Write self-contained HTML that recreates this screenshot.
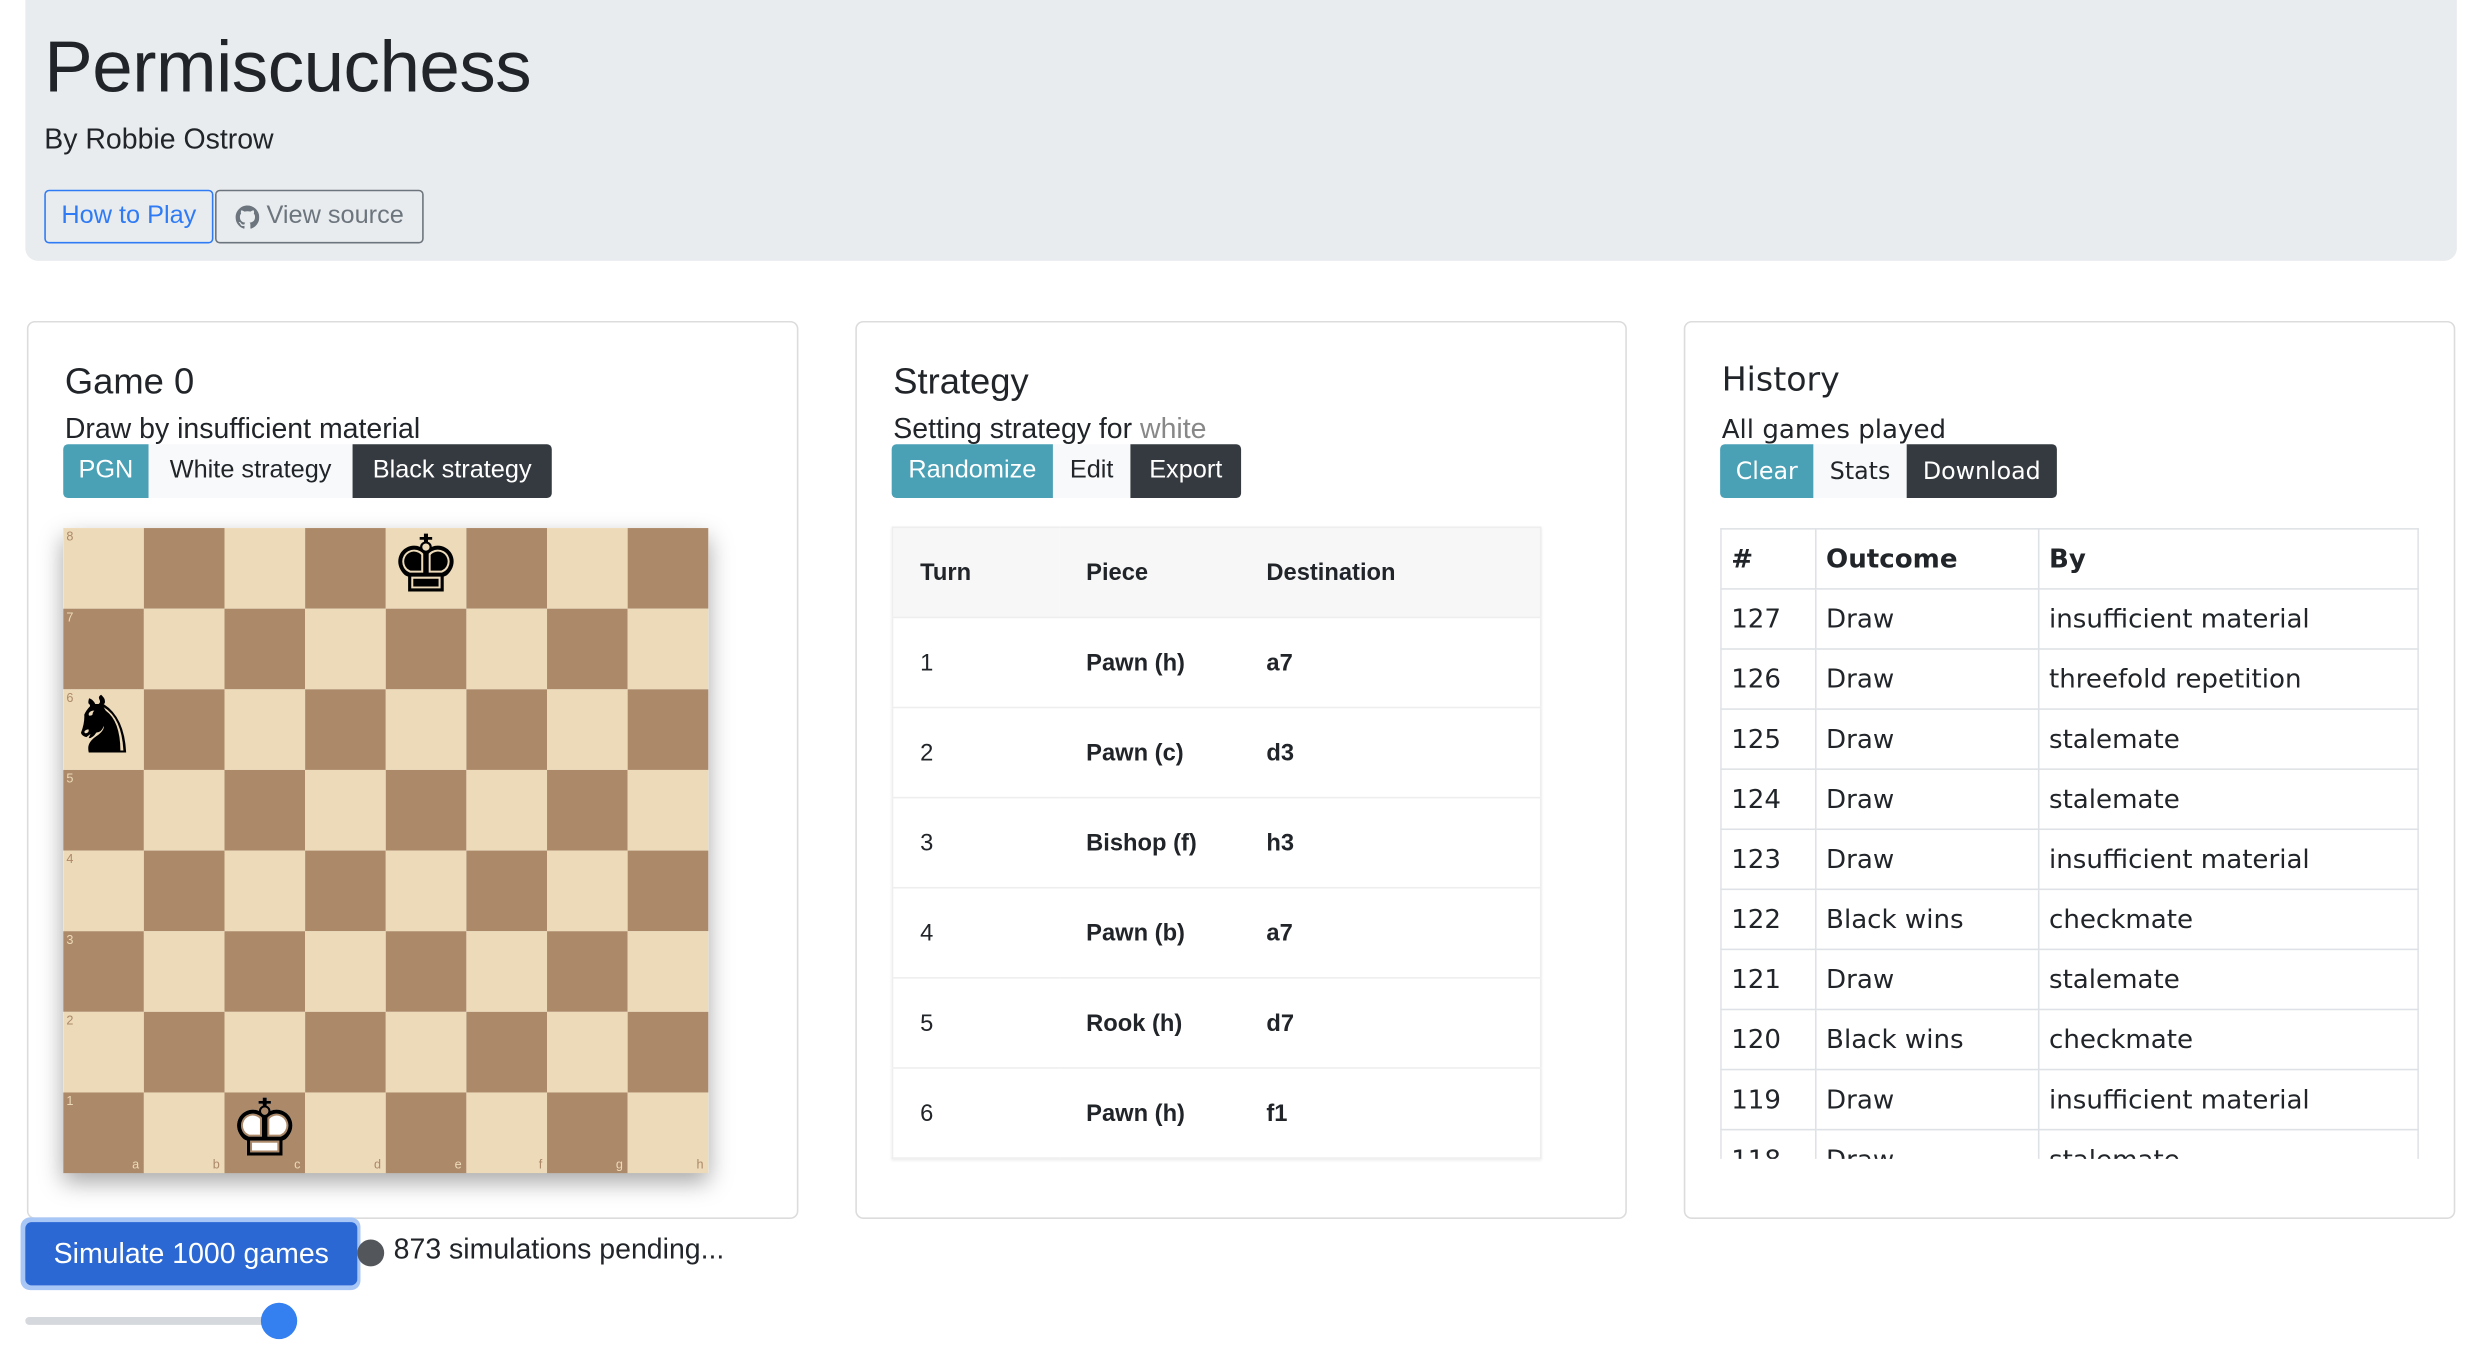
<!DOCTYPE html>
<html><head><meta charset="utf-8">
<style>
html,body{margin:0;padding:0;background:#fff;width:2478px;height:1346px;overflow:hidden}
#w{position:absolute;left:0;top:0;width:1568px;height:852px;transform:scale(1.581);transform-origin:0 0;font-family:"Liberation Sans",sans-serif;color:#212529}
.abs{position:absolute}
.jumbo{left:16px;top:-8px;width:1538px;height:173px;background:#e9ecef;border-radius:8px}
h1{position:absolute;left:28px;top:15px;margin:0;font-size:46px;font-weight:400;letter-spacing:-0.3px}
.btn{position:absolute;box-sizing:border-box;font-size:16px;display:flex;align-items:center;justify-content:center;white-space:nowrap}
.card{position:absolute;top:203px;width:488px;height:568px;border:1px solid #dcdcdc;border-radius:5px;box-sizing:border-box;background:#fff}
.ct{position:absolute;left:23px;top:24px;font-size:23px}
.cs{position:absolute;left:23px;top:57px;font-size:18px}
.board{position:absolute;left:40px;top:334px;width:408px;height:408px;box-shadow:0 6px 14px rgba(0,0,0,.35);display:grid;grid-template-columns:repeat(8,51px);grid-template-rows:repeat(8,51px)}
.sq{position:relative}
.l{background:#eddab9}.d{background:#ac8968}
.sq .n{position:absolute;left:2px;top:1px;font-size:8px}
.sq .f{position:absolute;right:3px;bottom:1px;font-size:8px}
.l .n,.l .f{color:#ac8968}.d .n,.d .f{color:#eddab9}
.pc{position:absolute;left:0;top:-2px;width:51px;height:51px;font-family:"DejaVu Sans",sans-serif;font-size:50px;line-height:51px;text-align:center;color:#000}
table{border-collapse:collapse}
.st{position:absolute;left:564px;top:333px;width:411px;font-size:15px;border:1px solid #eee;box-shadow:0 1px 2px rgba(0,0,0,.08)}
.st td,.st th{height:56px;border-top:1px solid #eee;text-align:left;padding:0 0 0 17px}
.st th{background:#f7f7f7;font-weight:700}
.st td.b{font-weight:700}
.hw{position:absolute;left:1088px;top:334px;width:442px;height:399px;overflow:hidden}
.ht{width:442px;font-family:"DejaVu Sans",sans-serif;font-size:16.5px;border:1px solid #dee2e6}
.ht td,.ht th{height:37px;border:1px solid #dee2e6;text-align:left;padding:0 0 0 6px;font-weight:400}
.ht th{font-weight:700}
</style></head><body><div id="w">
<div class="abs jumbo"></div>
<h1>Permiscuchess</h1>
<div class="abs" style="left:28px;top:78px;font-size:18px">By Robbie Ostrow</div>
<div class="btn" style="left:28px;top:120px;width:107px;height:34px;border:1px solid #2f7bf5;border-radius:3px;color:#2f7bf5">How to Play</div>
<div class="btn" style="left:136px;top:120px;width:132px;height:34px;border:1px solid #6c757d;border-radius:3px;color:#6c757d"><svg width="15" height="15" viewBox="0 0 16 16" style="margin-right:5px"><path fill="#6c757d" d="M8 0C3.58 0 0 3.58 0 8c0 3.540 2.29 6.53 5.47 7.59.4.07.55-.17.55-.38 0-.19-.01-.82-.01-1.49-2.010.37-2.530-.49-2.69-.94-.09-.23-.48-.94-.82-1.130-.28-.15-.68-.52-.01-.53.63-.01 1.080.58 1.230.82.72 1.210 1.870.87 2.330.66.07-.52.28-.87.51-1.070-1.780-.2-3.640-.89-3.640-3.950 0-.87.31-1.590.82-2.150-.08-.2-.36-1.020.08-2.120 0 0 .67-.21 2.200.82.64-.18 1.320-.27 2-.27.68 0 1.360.09 2 .27 1.530-1.040 2.200-.82 2.200-.82.44 1.100.16 1.920.08 2.120.51.56.82 1.270.82 2.150 0 3.070-1.870 3.750-3.650 3.950.29.25.54.73.54 1.480 0 1.070-.01 1.930-.01 2.200 0 .21.15.46.55.38A8.013 8.013 0 0016 8c0-4.420-3.580-8-8-8z"/></svg>View source</div>

<div class="card" style="left:17px">
<div class="ct">Game 0</div><div class="cs">Draw by insufficient material</div>
</div>
<div class="btn" style="left:40px;top:281px;width:54px;height:34px;background:#4aa0b5;color:#fff;border-radius:3px 0 0 3px">PGN</div>
<div class="btn" style="left:94px;top:281px;width:129px;height:34px;background:#f8f9fa">White strategy</div>
<div class="btn" style="left:223px;top:281px;width:126px;height:34px;background:#343a40;color:#fff;border-radius:0 3px 3px 0">Black strategy</div>
<div class="board">
<div class="sq l"><span class="n">8</span></div><div class="sq d"></div><div class="sq l"></div><div class="sq d"></div><div class="sq l"><span class="pc">♚</span></div><div class="sq d"></div><div class="sq l"></div><div class="sq d"></div>
<div class="sq d"><span class="n">7</span></div><div class="sq l"></div><div class="sq d"></div><div class="sq l"></div><div class="sq d"></div><div class="sq l"></div><div class="sq d"></div><div class="sq l"></div>
<div class="sq l"><span class="n">6</span><span class="pc">♞</span></div><div class="sq d"></div><div class="sq l"></div><div class="sq d"></div><div class="sq l"></div><div class="sq d"></div><div class="sq l"></div><div class="sq d"></div>
<div class="sq d"><span class="n">5</span></div><div class="sq l"></div><div class="sq d"></div><div class="sq l"></div><div class="sq d"></div><div class="sq l"></div><div class="sq d"></div><div class="sq l"></div>
<div class="sq l"><span class="n">4</span></div><div class="sq d"></div><div class="sq l"></div><div class="sq d"></div><div class="sq l"></div><div class="sq d"></div><div class="sq l"></div><div class="sq d"></div>
<div class="sq d"><span class="n">3</span></div><div class="sq l"></div><div class="sq d"></div><div class="sq l"></div><div class="sq d"></div><div class="sq l"></div><div class="sq d"></div><div class="sq l"></div>
<div class="sq l"><span class="n">2</span></div><div class="sq d"></div><div class="sq l"></div><div class="sq d"></div><div class="sq l"></div><div class="sq d"></div><div class="sq l"></div><div class="sq d"></div>
<div class="sq d"><span class="n">1</span><span class="f">a</span></div><div class="sq l"><span class="f">b</span></div><div class="sq d"><span class="pc" style="color:#fff;-webkit-text-stroke:0">♚</span><span class="pc">♔</span><span class="f">c</span></div><div class="sq l"><span class="f">d</span></div><div class="sq d"><span class="f">e</span></div><div class="sq l"><span class="f">f</span></div><div class="sq d"><span class="f">g</span></div><div class="sq l"><span class="f">h</span></div>
</div>

<div class="card" style="left:541px">
<div class="ct">Strategy</div><div class="cs">Setting strategy for <span style="color:#888">white</span></div>
</div>
<div class="btn" style="left:564px;top:281px;width:102px;height:34px;background:#4aa0b5;color:#fff;border-radius:3px 0 0 3px">Randomize</div>
<div class="btn" style="left:666px;top:281px;width:49px;height:34px;background:#f8f9fa">Edit</div>
<div class="btn" style="left:715px;top:281px;width:70px;height:34px;background:#343a40;color:#fff;border-radius:0 3px 3px 0">Export</div>
<table class="st">
<tr><th style="width:88px">Turn</th><th style="width:97px">Piece</th><th>Destination</th></tr>
<tr><td>1</td><td class="b">Pawn (h)</td><td class="b">a7</td></tr>
<tr><td>2</td><td class="b">Pawn (c)</td><td class="b">d3</td></tr>
<tr><td>3</td><td class="b">Bishop (f)</td><td class="b">h3</td></tr>
<tr><td>4</td><td class="b">Pawn (b)</td><td class="b">a7</td></tr>
<tr><td>5</td><td class="b">Rook (h)</td><td class="b">d7</td></tr>
<tr><td>6</td><td class="b">Pawn (h)</td><td class="b">f1</td></tr>
</table>

<div class="card" style="left:1065px">
<div class="ct" style="font-family:'DejaVu Sans',sans-serif;font-size:21px">History</div><div class="cs" style="font-family:'DejaVu Sans',sans-serif;font-size:16.5px;top:58px">All games played</div>
</div>
<div class="btn" style="left:1088px;top:281px;width:59px;height:34px;background:#4aa0b5;color:#fff;border-radius:3px 0 0 3px;font-family:'DejaVu Sans',sans-serif;font-size:15px">Clear</div>
<div class="btn" style="left:1147px;top:281px;width:59px;height:34px;background:#f8f9fa;font-family:'DejaVu Sans',sans-serif;font-size:15px">Stats</div>
<div class="btn" style="left:1206px;top:281px;width:95px;height:34px;background:#343a40;color:#fff;border-radius:0 3px 3px 0;font-family:'DejaVu Sans',sans-serif;font-size:15px">Download</div>
<div class="hw"><table class="ht">
<tr><th style="width:53px">#</th><th style="width:134px">Outcome</th><th>By</th></tr>
<tr><td>127</td><td>Draw</td><td>insufficient material</td></tr>
<tr><td>126</td><td>Draw</td><td>threefold repetition</td></tr>
<tr><td>125</td><td>Draw</td><td>stalemate</td></tr>
<tr><td>124</td><td>Draw</td><td>stalemate</td></tr>
<tr><td>123</td><td>Draw</td><td>insufficient material</td></tr>
<tr><td>122</td><td>Black wins</td><td>checkmate</td></tr>
<tr><td>121</td><td>Draw</td><td>stalemate</td></tr>
<tr><td>120</td><td>Black wins</td><td>checkmate</td></tr>
<tr><td>119</td><td>Draw</td><td>insufficient material</td></tr>
<tr><td>118</td><td>Draw</td><td>stalemate</td></tr>
</table></div>

<div class="btn" style="left:13px;top:770px;width:215px;height:46px;background:#a8c6f6;border-radius:6px"></div>
<div class="btn" style="left:16px;top:773px;width:210px;height:40px;background:#2b68d3;color:#fff;border-radius:4px;font-size:18px">Simulate 1000 games</div>
<div class="abs" style="left:226px;top:784px;width:17px;height:17px;border-radius:50%;background:#53565b"></div>
<div class="abs" style="left:249px;top:780px;font-size:18px">873 simulations pending...</div>
<div class="abs" style="left:16px;top:833px;width:165px;height:5px;background:#d5d8dc;border-radius:3px"></div>
<div class="abs" style="left:165px;top:824px;width:23px;height:23px;border-radius:50%;background:#3580f0"></div>
</div></body></html>
